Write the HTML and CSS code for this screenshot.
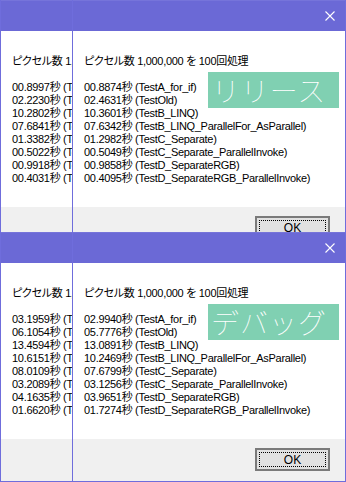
FILE: index.html
```html
<!DOCTYPE html>
<html lang="ja">
<head>
<meta charset="utf-8">
<link rel="stylesheet" href="styles.css">
</head>
<body>
<section class="shot shot-top">
  <div class="win win-left">
    <div class="title"></div>
    <div class="content">ピクセル数 1,000,000 を 100回処理

00.8997秒 (TestA_for_if)
02.2230秒 (TestOld)
10.2802秒 (TestB_LINQ)
07.6841秒 (TestB_LINQ_ParallelFor_AsParallel)
01.3382秒 (TestC_Separate)
00.5022秒 (TestC_Separate_ParallelInvoke)
00.9918秒 (TestD_SeparateRGB)
00.4031秒 (TestD_SeparateRGB_ParallelInvoke)</div>
    <div class="footer"></div>
  </div>
  <div class="win win-right">
    <div class="title">
      <svg class="close" width="10" height="10" viewBox="0 0 10 10"><path d="M0.5 0.5L9.5 9.5M9.5 0.5L0.5 9.5" stroke="#fff" stroke-width="1.1" fill="none"/></svg>
    </div>
    <div class="content">ピクセル数 1,000,000 を 100回処理

00.8874秒 (TestA_for_if)
02.4631秒 (TestOld)
10.3601秒 (TestB_LINQ)
07.6342秒 (TestB_LINQ_ParallelFor_AsParallel)
01.2982秒 (TestC_Separate)
00.5049秒 (TestC_Separate_ParallelInvoke)
00.9858秒 (TestD_SeparateRGB)
00.4095秒 (TestD_SeparateRGB_ParallelInvoke)</div>
    <div class="footer"><button class="ok"><span>OK</span></button></div>
    <div class="tag">リリース</div>
  </div>
</section>
<section class="shot">
  <div class="win win-left">
    <div class="title"></div>
    <div class="content">ピクセル数 1,000,000 を 100回処理

03.1959秒 (TestA_for_if)
06.1054秒 (TestOld)
13.4594秒 (TestB_LINQ)
10.6151秒 (TestB_LINQ_ParallelFor_AsParallel)
08.0109秒 (TestC_Separate)
03.2089秒 (TestC_Separate_ParallelInvoke)
04.1635秒 (TestD_SeparateRGB)
01.6620秒 (TestD_SeparateRGB_ParallelInvoke)</div>
    <div class="footer"></div>
  </div>
  <div class="win win-right">
    <div class="title">
      <svg class="close" width="10" height="10" viewBox="0 0 10 10"><path d="M0.5 0.5L9.5 9.5M9.5 0.5L0.5 9.5" stroke="#fff" stroke-width="1.1" fill="none"/></svg>
    </div>
    <div class="content">ピクセル数 1,000,000 を 100回処理

02.9940秒 (TestA_for_if)
05.7776秒 (TestOld)
13.0891秒 (TestB_LINQ)
10.2469秒 (TestB_LINQ_ParallelFor_AsParallel)
07.6799秒 (TestC_Separate)
03.1256秒 (TestC_Separate_ParallelInvoke)
03.9651秒 (TestD_SeparateRGB)
01.7274秒 (TestD_SeparateRGB_ParallelInvoke)</div>
    <div class="footer"><button class="ok"><span>OK</span></button></div>
    <div class="tag">デバッグ</div>
  </div>
</section>
</body>
</html>
```
FILE: styles.css
```css
html, body {
  margin: 0;
  padding: 0;
}
body {
  width: 346px;
  height: 482px;
  overflow: hidden;
  background: #ffffff;
  font-family: "Liberation Sans", "Noto Sans CJK JP", sans-serif;
  color: #000;
}
.shot {
  display: flex;
  height: 250px;
  overflow: hidden;
}
.shot-top {
  height: 232px;
}
.win {
  position: relative;
  display: flex;
  flex-direction: column;
  height: 250px;
  box-sizing: border-box;
  border-left: 1px solid #6f6ddc;
  border-right: 1px solid #6f6ddc;
  border-bottom: 1px solid #6f6ddc;
  background: #fff;
}
.win-left {
  width: 72px;
  flex: none;
  overflow: hidden;
  border-right: none;
}
.win-right {
  flex: 1;
  min-width: 0;
}
.title {
  height: 31px;
  flex: none;
  background: #6b69d6;
  box-shadow: inset 0 1px 0 #7674da;
  display: flex;
  justify-content: flex-end;
  align-items: center;
  padding-right: 10px;
}
.close {
  display: block;
}
.content {
  height: 176px;
  flex: none;
  box-sizing: border-box;
  padding: 24px 0 0 11px;
  white-space: pre;
  font-size: 11px;
  line-height: 13px;
  letter-spacing: -0.3px;
  font-feature-settings: "palt";
}
.footer {
  flex: 1;
  background: #f0f0f0;
  display: flex;
  justify-content: flex-end;
  align-items: flex-start;
  padding: 9px 15px 0 0;
}
.ok {
  width: 75px;
  height: 23px;
  box-sizing: border-box;
  border: 2px solid #7a7a7a;
  background: #e1e1e1;
  padding: 2px;
  margin: 0;
  font-family: "Liberation Sans", sans-serif;
  font-size: 12px;
  color: #000;
}
.ok span {
  display: flex;
  align-items: center;
  justify-content: center;
  height: 100%;
  box-sizing: border-box;
  border: 1px dotted #000;
  line-height: 1;
}
.tag {
  position: absolute;
  left: 135px;
  top: 72px;
  width: 131px;
  height: 36px;
  box-sizing: border-box;
  padding-right: 9px;
  background: #80d0b2;
  color: #fff;
  font-family: "Noto Sans CJK JP Thin", "Noto Sans CJK JP Light", "Noto Sans CJK JP", sans-serif;
  font-weight: 100;
  font-size: 28px;
  line-height: 36px;
  text-align: center;
  letter-spacing: 1px;
}
```
